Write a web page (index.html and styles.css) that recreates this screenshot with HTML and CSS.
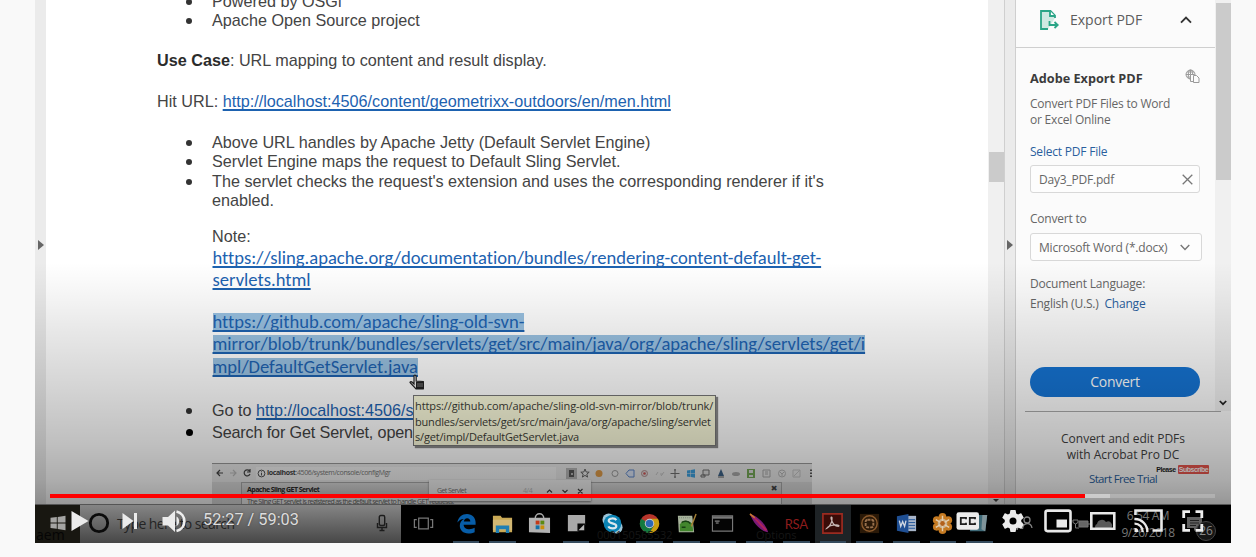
FILE: index.html
```html
<!DOCTYPE html>
<html lang="en">
<head>
<meta charset="utf-8">
<title>Video player</title>
<link rel="stylesheet" href="styles.css">
</head>
<body>
<main class="player">
  <div class="screen">
    <div class="rail"><i class="tri"></i></div>
    <article class="doc">
      <p class="li l1"><span>Powered by OSGi</span></p>
      <p class="li"><span>Apache Open Source project</span></p>
      <p class="use"><b>Use Case</b>: URL mapping to content and result display.</p>
      <p class="hit">Hit URL: <a>http://localhost:4506/content/geometrixx-outdoors/en/men.html</a></p>
      <p class="li above"><span>Above URL handles by Apache Jetty (Default Servlet Engine)</span></p>
      <p class="li t2"><span>Servlet Engine maps the request to Default Sling Servlet.</span></p>
      <p class="li t3"><span>The servlet checks the request's extension and uses the corresponding renderer if it's</span></p>
      <p class="in">enabled.</p>
      <p class="in note">Note:</p>
      <p class="cal c1"><a>https://sling.apache.org/documentation/bundles/rendering-content-default-get-</a></p>
      <p class="cal c2"><a>servlets.html</a></p>
      <p class="cal c3"><a class="sel">https://github.com/apache/sling-old-svn-</a></p>
      <p class="cal c4"><a class="sel">mirror/blob/trunk/bundles/servlets/get/src/main/java/org/apache/sling/servlets/get/i</a></p>
      <p class="cal c5"><a class="sel">mpl/DefaultGetServlet.java</a></p>
      <p class="li go"><span>Go to <a>http://localhost:4506/s</a></span></p>
      <p class="li search"><span>Search for Get Servlet, open</span></p>
      <section class="shot">
        <div class="shot-bar">
          <svg width="44" height="18" viewBox="0 0 44 18" fill="none" stroke="#444" stroke-width="1.2"><path d="M11 9H5m3-3-3 3 3 3"/><path d="M18 9h6m-3-3 3 3-3 3" stroke="#bbb"/><path d="M37.500 7a3 3 0 1 0 .5 3M38 5v3h-3"/></svg>
          <div class="url"><svg width="9" height="9" viewBox="0 0 9 9" fill="none" stroke="#555"><circle cx="4.500" cy="4.500" r="3.400"/><path d="M4.500 4v2.500M4.500 2.300v1"/></svg><span><b>localhost</b>:4506/system/console/configMgr</span></div>
          <svg class="ext" width="256" height="18" viewBox="0 0 256 18">
            <path fill="#aaa" d="M10 4h11v11H10z"/><path fill="#333" d="M13 6h5v7h-5z"/><path d="M15 9h2v2h-2z" fill="#aaa"/>
            <path d="m29 5 1.200 3 3 .2-2.400 1.900.8 3-2.600-1.700-2.600 1.700.8-3-2.400-1.900 3-.2z" fill="none" stroke="#444"/>
            <circle cx="43" cy="9.500" r="3.500" fill="#dd8a22"/><circle cx="59" cy="9.500" r="3" fill="#eee" stroke="#888"/>
            <path d="M70 9.500 73 6h5v7h-5z" fill="#d8e4f8" stroke="#3b6fc4"/><circle cx="88.500" cy="9.500" r="3" fill="#ddd" stroke="#a77"/><circle cx="88.500" cy="9.500" r="1.300" fill="#c33"/>
            <path d="m100 11 2-3m3 4 3-4m-4 2h3" stroke="#bbb"/><path d="M119 5v9m-4.500-4.500h9M118 6h2m-2 7h2" stroke="#555"/>
            <path d="M131 6.500 134.500 6v3.200H131zm4-.5 4-.7v4h-4zM131 9.800h3.500V13l-3.500-.5zm4 0h4v4l-4-.7z" fill="#1590dd"/>
            <path d="M147 6h6v5h-6zm-2 5h4v2h-4z" fill="#ddd" stroke="#555"/><path d="m165 5 3 7h-6z" fill="#13416f"/><path d="M162 13h6" stroke="#444"/>
            <ellipse cx="180" cy="10" rx="4" ry="2" fill="#999"/><path d="M191 5h8v9h-8z" fill="#5a9a35"/><path d="M193 6h4v3h-4zm0 5h4v2h-4z" fill="#ddd"/>
            <path d="M207 6h7v7h-7zm2 2h3m-3 2h3" fill="none" stroke="#999"/><circle cx="226" cy="9.500" r="3.500" fill="none" stroke="#aaa"/><path d="m224 8 2 2 2-2m-2 2v2" fill="none" stroke="#aaa"/>
            <path d="M237 6h7v7h-7zm1 6 6-6" fill="none" stroke="#bbb"/><path d="M255 5.500v1.500m0 1.500V10m0 1.500V13" stroke="#333" stroke-width="2"/>
          </svg>
        </div>
        <div class="shot-body">
          <div class="card">
            <div class="card-h"><b>Apache Sling GET Servlet</b><i>✖</i></div>
            <div class="card-b">The Sling GET servlet is registered as the default servlet to handle GET requests.</div>
          </div>
        </div>
        <div class="find"><span>Get Servlet</span><em>4/4</em><svg width="46" height="10" viewBox="0 0 46 10" fill="none" stroke="#444" stroke-width="1.200"><path d="M3 6.500 5.500 4 8 6.500M18.500 4 21 6.500 23.500 4M34 3l4.500 4.500m0-4.500L34 7.500"/></svg></div>
      </section>
    </article>
    <div class="doc-scroll"><i></i><svg width="8" height="6" viewBox="0 0 8 6"><path d="M1 1h6L4 4z" fill="#444"/></svg></div>
    <div class="rail right"><i class="tri"></i></div>
    <div class="side">
      <div class="side-top">
        <aside class="panel">
          <header>
            <svg width="22" height="22" viewBox="0 0 22 22" fill="none" stroke="#2ba587" stroke-width="1.800"><path d="M16 9V6.500L11.500 2H2v18h7" fill="#cfe9e2"/><path d="M11 2v5h5" fill="#fff"/><path d="M10.500 12v4h8m-3-3 3.200 3-3.200 3" /></svg>
            <span>Export PDF</span>
            <svg width="12" height="8" viewBox="0 0 12 8" fill="none" stroke="#333" stroke-width="1.900"><path d="m1 6.700 5-5 5 5"/></svg>
          </header>
          <div class="title"><b>Adobe Export PDF</b>
            <svg width="15" height="14" viewBox="0 0 15 14" fill="none" stroke="#9a9a9a"><circle cx="5.500" cy="5.500" r="4.500"/><path d="M1 5.500h8M5.500 1v9M2 3h7M2 8h5"/><ellipse cx="5.500" cy="5.500" rx="2.200" ry="4.500"/><path d="M5.500 5.500h4v7h-4z" fill="#fbfbfb"/><path d="M8.500 6.500h3l2.500 2.500v4.500H8.500z" fill="#fbfbfb"/></svg></div>
          <p class="d1">Convert PDF Files to Word<br>or Excel Online</p>
          <p class="d2"><a>Select PDF File</a></p>
          <div class="field"><span>Day3_PDF.pdf</span><svg width="11" height="11" viewBox="0 0 11 11" stroke="#777" stroke-width="1.300"><path d="m.7.700 9.600 9.600m0-9.600L.7 10.300"/></svg></div>
          <p class="d3">Convert to</p>
          <div class="field wide"><span>Microsoft Word (*.docx)</span><svg width="10" height="7" viewBox="0 0 10 7" fill="none" stroke="#777" stroke-width="1.400"><path d="m.7 1 4.300 4.500L9.300 1"/></svg></div>
          <p class="d4">Document Language:</p>
          <p class="d5">English (U.S.) <a>Change</a></p>
          <button class="convert">Convert</button>
        </aside>
        <div class="side-scroll"><i></i><svg width="8" height="6" viewBox="0 0 8 6" fill="none" stroke="#222" stroke-width="1.700"><path d="m.8 1 3.200 3.200L7.200 1"/></svg></div>
      </div>
      <div class="promo">
        <p>Convert and edit PDFs<br>with Acrobat Pro DC</p>
        <p class="pls">Please <mark>Subscribe</mark></p>
        <p class="trial"><a>Start Free Trial</a></p>
      </div>
    </div>
    <div class="tooltip">https://github.com/apache/sling-old-svn-mirror/blob/trunk/<br><span>bundles/servlets/get/src/main/java/org/apache/sling/servlet</span><br><span>s/get/impl/DefaultGetServlet.java</span></div>
    <svg class="hand" width="18" height="18" viewBox="0 0 18 18"><path d="M5 1.500c1.500-.8 2.200.2 2.200 1.500v4l7 .5v7.500H7L1 8.500c0-1.200 1.500-1.200 2.500 0L5 10z" fill="#f4f4f4" stroke="#222" stroke-width="1.200"/><path d="M7 7.500h8V15H7z" fill="#222"/><path d="M8.500 10h5m-5 2h5" stroke="#ddd" stroke-dasharray="1 1"/></svg>
    <div class="shade"></div>
  </div>

  <div class="taskbar">
    <div class="start"><svg width="18" height="16" viewBox="0 0 18 16" fill="#a5a5a3"><path d="M1.500 2.800 7.800 2v5.500H1.500zM8.700 1.900 16.500.8v6.700H8.700zM1.500 8.400h6.300v5.400l-6.300-.9zM8.700 8.400h7.800v6.800l-7.800-1.200z"/></svg></div>
    <div class="search-box"><svg width="22" height="22" viewBox="0 0 22 22"><circle cx="11" cy="11" r="8.700" fill="none" stroke="#0b0b0b" stroke-width="2.800"/></svg><span>Type here to search</span>
      <svg width="12" height="18" viewBox="0 0 12 18" fill="none" stroke="#1c1c1c" stroke-width="1.400"><rect x="3.300" y="1.500" width="5.400" height="10" rx="1.500"/><path d="M1.500 9v4.500h9V9M6 13.500v3M3.500 16.500h5"/></svg></div>
    <div class="apps">
      <span class="app none"><svg viewBox="0 0 24 24" fill="none" stroke="#777" stroke-width="1.300"><path d="M7 6.500h10v11H7zM5 8H2.500v8H5M19 8h2.500v8H19"/></svg></span>
      <span class="app"><svg viewBox="0 0 24 24"><path d="M2.500 11C3.200 5.500 7.500 2 12.500 2c5.500 0 9 4 9 8.800v2.500H9c.3 3.500 3 4.700 6 4.700 2 0 4-.6 5.500-1.500V21c-1.800.9-4 1.400-6.500 1.400-5.500 0-9-3.500-9-8 0-3 1.600-5.500 4.200-7-3.200.2-5.200 1.600-6.700 3.600zM9.200 10H16c0-2-1.300-3.400-3.300-3.400-2 0-3.200 1.400-3.500 3.400z" fill="#075da8"/></svg></span>
      <span class="app"><svg viewBox="0 0 24 24"><path d="M2 4h8l1.500 2H22v15H2z" fill="#c9a955"/><path d="M2 8h20v11H2z" fill="#d3b874"/><path d="M5 22v-8h14v8h-3.500v-4h-7v4z" fill="#1f7fb4"/></svg></span>
      <span class="app none"><svg viewBox="0 0 24 24"><path d="M7.500 7c0-7 9-7 9 0" fill="none" stroke="#aaa" stroke-width="1.500"/><path d="M1 6h22v16l-22-1z" fill="#b2b2b2"/><path d="M8 9h4v4H8z" fill="#c43a18"/><path d="M13 9h4v4h-4z" fill="#5c8a10"/><path d="M8 14h4v4H8z" fill="#1471a8"/><path d="M13 14h4v4h-4z" fill="#c98f08"/></svg></span>
      <span class="app"><svg viewBox="0 0 24 24"><path d="M3 3h18v10l-7 7H3z" fill="#a9a9a9"/><path d="M13 12h8v8h-8z" fill="#0a0a0a"/><path d="M20 13v6h-6z" fill="#b9b9b9"/></svg></span>
      <span class="app"><svg viewBox="0 0 24 24"><circle cx="8" cy="8" r="6.500" fill="#9cc4d8"/><circle cx="16" cy="16" r="6.500" fill="#9cc4d8"/><circle cx="12" cy="12" r="9.200" fill="#0a83b4"/><path d="M16 8.500c-1.500-2.500-8-2.500-8 .7 0 3.300 8 2 8 5.400 0 3.300-7 3.200-8.300.4" fill="none" stroke="#dce8ee" stroke-width="2.200"/></svg></span>
      <span class="app"><svg viewBox="0 0 24 24"><circle cx="12" cy="12" r="10" fill="#b8352b"/><path d="M3.300 7A10 10 0 0 0 12 22l4.500-7.500L12 12z" fill="#147a3f"/><path d="M12 22a10 10 0 0 0 8.700-15H12l4.500 7.500z" fill="#c9a010"/><circle cx="12" cy="12" r="4.900" fill="#ccc"/><circle cx="12" cy="12" r="3.900" fill="#2b68b5"/></svg></span>
      <span class="app"><svg viewBox="0 0 24 24"><path d="M3 4h15l2 17H4z" fill="#a8b49c"/><path d="M5 13c4-6 8-4 13-1l1 8H5z" fill="#42862d"/><path d="M7 11c2-2 7-2 9 1M7 16h4" stroke="#173f13" stroke-width="1.500" fill="none"/><path d="M4 6h13" stroke="#717b70" stroke-dasharray="1 1.200"/><path d="m22 2-5 13" stroke="#a58035" stroke-width="1.500"/></svg></span>
      <span class="app"><svg viewBox="0 0 24 24"><path d="M1.500 4h21v16h-21z" fill="#050505" stroke="#777" stroke-width="1.200"/><path d="M2 4.500h20v2.500H2z" fill="#777"/><path d="M4 9.500h5m-4 2h3" stroke="#aaa"/></svg></span>
      <span class="app"><svg viewBox="0 0 24 24"><path d="M2 2c7 1 17 11 19 19-6 0-15-8-19-19z" fill="#7b1a78"/><path d="M3 3c5 4 10 10 16 16" stroke="#b02458" stroke-width="2" fill="none"/><path d="M2 2l5 4" stroke="#c28128" stroke-width="1.500"/></svg></span>
      <span class="app rsa">RSA</span>
      <span class="app on"><svg viewBox="0 0 24 24"><path d="M2 2h20v20H2z" fill="#3a0c08" stroke="#9b2b20" stroke-width="1.800"/><path d="M6 17c3-1 6-7 5.500-11-.5-1.500-1.500-.5-.8 1.500C12 12 15 15 18 15c1.500-.3.500-1.500-2-1.500-4 0-8 1-10 3.500z" fill="none" stroke="#c6b5b2" stroke-width="1.300"/></svg></span>
      <span class="app"><svg viewBox="0 0 24 24"><path d="M2 2h20v20H2z" fill="#2a1908"/><circle cx="12" cy="12" r="8" fill="none" stroke="#8b5a2d" stroke-width="1.500"/><rect x="8" y="8" width="8" height="8" rx="2" fill="none" stroke="#98704c" stroke-width="2" stroke-dasharray="3 1"/></svg></span>
      <span class="app"><svg viewBox="0 0 24 24"><path d="M12 4h10v16H12z" fill="#a8b5c9"/><path d="M14 8h7m-7 3h7m-7 3h7m-7 3h7" stroke="#24579a"/><path d="M2 4.500 14 2v20L2 19.500z" fill="#1f4f93"/><path d="m4.500 9 1.500 6 2-5 2 5 1.500-6" fill="none" stroke="#d1d8e2" stroke-width="1.400"/></svg></span>
      <span class="app"><svg viewBox="0 0 24 24"><g fill="#c57a22"><circle cx="12" cy="5" r="4"/><circle cx="12" cy="19" r="4"/><circle cx="6" cy="8.500" r="4"/><circle cx="18" cy="8.500" r="4"/><circle cx="6" cy="15.500" r="4"/><circle cx="18" cy="15.500" r="4"/></g><circle cx="12" cy="12" r="5" fill="#c9b18f"/><path d="M12 4v16M5 8l14 8M5 16l14-8" stroke="#e3ceb0" stroke-width="1.500"/><circle cx="12" cy="12" r="2.500" fill="#b3611c"/></svg></span>
      <span class="app"><svg viewBox="0 0 24 24"><path d="M5 3h15l-2 17H2z" fill="#3e6a78"/><path d="m15 3 5 0-2 17-4-2z" fill="#80949a"/></svg></span>
    </div>
    <div class="tray">
      <svg width="18" height="18" viewBox="0 0 18 18" fill="none" stroke="#858585" stroke-width="1.300"><circle cx="11" cy="5" r="3"/><path d="M6.500 14c.5-7 8.500-7 9.500-1"/><circle cx="4" cy="9" r="2"/><path d="M1 15c.5-4 4-4 5.500-1"/></svg>
      <svg class="bat" width="18" height="12" viewBox="0 0 18 12" fill="none" stroke="#777"><path d="M1 2h5v2.500L3.500 6 1 4.500zM3.500 6v4H7"/><path d="M7 3h9v6H7z" fill="#666"/><path d="M17 5v2"/></svg>
      <svg class="cloud" width="20" height="12" viewBox="0 0 20 12" fill="#595959"><path d="M3 11a3 3 0 0 1 1-5 5 5 0 0 1 9-2 4 4 0 0 1 4 7z"/></svg>
      <div class="clock">6:54 AM<br>9/26/2018</div>
      <div class="action"><svg width="18" height="16" viewBox="0 0 18 16"><path d="M1 1h15v11h-5l-3 3v-3H1z" fill="#606060"/><path d="M4 4.500h9m-9 2.500h9m-9 2.500h6" stroke="#222"/></svg><b>26</b></div>
    </div>
    <span class="ghost g1">aem</span><span class="ghost g2">000150565532</span><span class="ghost g3">Options</span>
  </div>

  <div class="chrome">
    <div class="progress"><i class="played"></i><i class="buffered"></i></div>
    <div class="controls">
      <svg class="play" width="18" height="22" viewBox="0 0 18 22"><path d="M.5 1v20L17.500 11z"/></svg>
      <svg class="next" width="16" height="18" viewBox="0 0 16 18"><path d="M.5 1v16L11.500 9zM12 1h3v16h-3z"/></svg>
      <svg class="vol" width="24" height="24" viewBox="0 0 24 24"><path d="M.5 8v8.500H6l7 6.500V1.500L6 8z"/><path d="M14.500 7.500c3.500 1.500 3.500 8 0 9.500z"/><path d="M14.500 2.500c10.500 2.500 10.500 17 0 19.500" fill="none" stroke="#eee" stroke-width="2.600"/></svg>
      <span class="time">52:27 / 59:03</span>
      <svg class="cc" width="24" height="18" viewBox="0 0 24 18"><rect x=".5" y=".3" width="22.500" height="17.400" rx="2.300"/><path d="M10 7.200V5.800H4.800v6.400H10v-1.400M19 7.200V5.800h-5.200v6.400H19v-1.400" fill="none" stroke="#1c1c1c" stroke-width="1.800"/></svg>
      <svg class="gear" width="22" height="22" viewBox="2 2 20 20"><path d="M19.430 12.980c.04-.32.070-.64.070-.98s-.03-.66-.07-.98l2.110-1.650a.5.500 0 0 0 .12-.64l-2-3.460a.5.500 0 0 0-.61-.22l-2.490 1a7.300 7.300 0 0 0-1.690-.98l-.38-2.650A.49.490 0 0 0 14 2h-4a.49.490 0 0 0-.49.420l-.38 2.650c-.61.250-1.170.59-1.690.98l-2.490-1a.49.490 0 0 0-.61.220l-2 3.460a.49.490 0 0 0 .12.640l2.110 1.650c-.04.320-.07.650-.07.980s.03.660.070.980l-2.110 1.650a.5.500 0 0 0-.12.640l2 3.460c.12.220.39.300.61.220l2.490-1c.52.400 1.080.73 1.690.98l.38 2.650c.03.240.24.420.49.420h4c.25 0 .46-.18.490-.42l.38-2.650a7.300 7.300 0 0 0 1.690-.98l2.490 1c.23.090.49 0 .61-.22l2-3.460a.5.500 0 0 0-.12-.64zM12 15.200a3.200 3.200 0 1 1 0-6.400 3.200 3.200 0 0 1 0 6.400z"/></svg>
      <svg class="mini" width="28" height="24" viewBox="0 0 28 24"><rect x="1.500" y="1.600" width="25" height="20.500" rx="2" fill="none" stroke="#e8e8e8" stroke-width="2.600"/><path d="M12.500 10.500h10.500v8H12.500z"/></svg>
      <svg class="theatre" width="26" height="18" viewBox="0 0 26 18"><path d="M1.300 1.300h23v15.400h-23z" fill="none" stroke="#e8e8e8" stroke-width="2.600"/></svg>
      <svg class="cast" width="29" height="24" viewBox="0 0 29 24"><path d="M1.500 6V1.500h26v20H18.500" fill="none" stroke="#e8e8e8" stroke-width="2.600"/><path d="M.5 19v4h4a4 4 0 0 0-4-4z"/><path d="M.5 14.600a8 8 0 0 1 8.200 8.400M.5 10a12.500 12.500 0 0 1 12.800 13" fill="none" stroke="#e8e8e8" stroke-width="2.400"/></svg>
      <svg class="full" width="22" height="22" viewBox="0 0 22 22"><path d="M1.700 8V1.700H8M13.500 1.700h6.300V8M19.800 14v6.300h-6.300M8 20.300H1.700V14" fill="none" stroke="#eee" stroke-width="2.800"/></svg>
    </div>
  </div>
</main>
</body>
</html>
```
FILE: styles.css
```css
* { box-sizing: border-box; }
body { margin: 0; background: #f9f9f9; overflow: hidden; }
p { margin: 0; white-space: pre; }
svg { display: block; flex: none; }

.player {
  position: relative;
  display: grid;
  grid-template-rows: 504px 39px;
  width: 1196px;
  height: 543px;
  margin-left: 35px;
  overflow: hidden;
  background: #000;
}
.screen { position: relative; display: flex; background: #fff; overflow: hidden; }
.shade {
  position: absolute;
  inset: 262px 0 0 0;
  background: linear-gradient(rgba(0,0,0,0), rgba(0,0,0,.035) 12%, rgba(0,0,0,.09) 28%, rgba(0,0,0,.17) 52%, rgba(0,0,0,.25) 75%, rgba(0,0,0,.32) 90%, rgba(0,0,0,.4));
}

.rail { display: flex; flex: none; width: 11px; padding: 240px 0 0 3px; background: #ebebeb; }
.rail.right { width: 12px; border: solid #cfcfcf; border-width: 0 1px; padding-left: 2px; }
.tri { width: 0; height: 0; border: solid transparent; border-width: 5px 0 5px 6px; border-left-color: #666; }

/* document page */
.doc {
  flex: none;
  width: 942px;
  height: 504px;
  padding-left: 111px;
  overflow: hidden;
  color: #444;
  font: 16.2px/19px "Liberation Sans", Arial, sans-serif;
}
.doc a { color: #1d62b0; text-decoration: underline; text-decoration-thickness: 1.5px; text-underline-offset: 2px; text-decoration-skip-ink: none; }
.doc b { color: #2b2b2b; }
.li { display: flex; align-items: center; padding-left: 29px; }
.li::before { content: ""; flex: none; width: 6px; height: 6px; margin-right: 20px; border-radius: 50%; background: #333; }
.in { padding-left: 55px; }
.l1 { margin-top: -8px; }
.use { margin-top: 21px; }
.hit { margin-top: 21.5px; }
.above { margin-top: 22.5px; }
.t3 { margin-top: 1px; }
.note { margin-top: 17px; }
.cal { height: 22px; padding-left: 55.5px; font: 18.6px/22px Carlito, Lato, "Open Sans", sans-serif; font-variant-ligatures: none; }
.c1 { margin-top: 1px; }
.c3 { margin-top: 20px; }
.c4 { letter-spacing: -.01px; }
.c5 { margin-top: 1px; }
.sel { display: inline-block; height: 18px; line-height: 18px; background: #99c1e1; }
.go { margin-top: 23px; }
.search { margin-top: 3px; letter-spacing: -.15px; }
.search::before { background: #000; width: 7px; height: 7px; margin-right: 19px; }

/* embedded browser capture */
.shot { position: relative; width: 600px; height: 45px; margin: 21px 0 0 55px; border-top: 1px solid #999; background: #dcdcdc; font: 7px/10px "Open Sans", sans-serif; }
.shot-bar { display: flex; align-items: center; height: 18px; background: #e9e9e9; }
.url { display: flex; align-items: center; gap: 1px; flex: none; width: 300px; height: 13px; padding-left: 1px; background: #f3f3f3; color: #777; letter-spacing: -.38px; }
.url b { color: #444; }
.ext { opacity: .8; }
.shot-body { padding-left: 29px; }
.card { width: 541px; border: 1px solid #aaa; background: #f0f0f0; }
.card-h { display: flex; justify-content: space-between; height: 13px; padding: 0 4px 0 5px; background: linear-gradient(#ddd, #c9c9c9); line-height: 13px; letter-spacing: -.55px; }
.card-h b { font-size: 7px; }
.card-h i { font: 8px/12px "DejaVu Sans", sans-serif; }
.card-b { padding: 0 5px; font: 7px/12px "Open Sans", sans-serif; letter-spacing: -.64px; color: #666; white-space: nowrap; }
.find { position: absolute; left: 217px; top: 16px; display: flex; align-items: center; width: 162px; height: 21px; padding-left: 8px; background: #f3f3f3; box-shadow: 0 1px 2px #777; color: #777; }
.find em { margin: 0 12px 0 57px; font-style: normal; color: #bbb; letter-spacing: -.5px; }
.find span { letter-spacing: -.6px; }

.doc-scroll { display: flex; flex-direction: column; justify-content: space-between; align-items: center; flex: none; width: 16px; padding-top: 152px; background: #f0f0f0; }
.doc-scroll i { width: 15px; height: 30px; background: #cbcbcb; }

/* export panel */
.side { display: flex; flex-direction: column; flex: none; width: 215px; background: #fbfbfb; color: #666; font: 12px/15px "Open Sans", "Noto Sans", sans-serif; letter-spacing: -.21px; }
.side a { color: #2a5f9e; }
.side-top { display: flex; height: 411px; }
.panel { width: 199px; padding: 0; }
.panel header { display: flex; align-items: center; height: 48px; padding: 0 0 8px 23px; border-bottom: 1px solid #cfcfcf; font-size: 14px; letter-spacing: 0; color: #5c5c5c; }
.panel header span { width: 110px; margin-left: 9px; }
.title { display: flex; justify-content: space-between; height: 20px; margin-top: 20px; padding: 0 15px 0 14px; font-size: 12.7px; line-height: 20px; letter-spacing: 0; color: #3b3b3b; }
.title svg { margin-top: 1px; }
.panel p { padding-left: 14px; }
.d1 { margin-top: 8px; line-height: 15.5px; }
.d2 { margin-top: 17px; }
.field { display: flex; align-items: center; justify-content: space-between; width: 170px; height: 28px; margin: 6px 0 0 14px; padding: 0 6px 0 8px; border: 1px solid #d8d8d8; border-radius: 3px; background: #fdfdfd; }
.field.wide { width: 172px; margin-top: 7px; padding-right: 11px; }
.d3 { margin-top: 18px; }
.d4 { margin-top: 15px; }
.d5 { margin-top: 5px; }
.d5 a { margin-left: 3px; }
.convert { width: 170px; height: 30px; margin: 56px 0 0 14px; padding: 0; border: 0; border-radius: 15px; background: #1573d2; color: #fff; font: 14px/28px "Open Sans", sans-serif; letter-spacing: -.3px; }
.side-scroll { display: flex; flex-direction: column; justify-content: space-between; align-items: center; width: 16px; padding: 3px 0 5px; background: #f0f0f0; }
.side-scroll i { width: 15px; height: 177px; background: #cbcbcb; }
.promo { margin: 0 10px 0 9px; height: 93px; padding-top: 19px; border-top: 1px solid #a8a8a8; text-align: center; letter-spacing: 0; color: #404040; }
.promo p { line-height: 15.5px; }
.promo p.pls { display: flex; justify-content: flex-end; align-items: center; gap: 1px; height: 9px; margin-top: 3px; padding-right: 12px; font: bold 7px/9px "Liberation Sans", sans-serif; letter-spacing: -.5px; color: #222; }
.pls mark { width: 31px; background: #e8564e; color: #fff; border-radius: 1px; }
.promo p.trial { margin-top: -3px; font-size: 11.5px; letter-spacing: -.65px; }

.tooltip { position: absolute; left: 378px; top: 395px; width: 303px; height: 51px; padding: 2px 0 0 1px; border: 1px solid #777; background: #fbfbdc; box-shadow: 2px 2px 1px #8a8a8a; color: #3c3c35; font: 11px/15.6px "Open Sans", sans-serif; letter-spacing: -.1px; white-space: nowrap; }
.tooltip span { letter-spacing: -.18px; }
.hand { position: absolute; left: 374px; top: 374px; }

/* desktop taskbar */
.taskbar { position: relative; display: flex; border-top: 1px solid #555; background: #000; }
.start { display: flex; flex: none; width: 45px; padding: 10px 0 0 14px; background: #181711; }
.search-box { display: flex; flex: none; align-items: center; width: 321px; padding: 0 13px 0 8px; background: linear-gradient(#858585, #474747); color: #242424; font: 14px/38px "Open Sans", sans-serif; letter-spacing: -.6px; }
.search-box svg { margin-top: -2px; }
.search-box span { width: 259px; margin-left: 7px; }
.apps { display: flex; flex: none; width: 600px; padding-left: 4px; background: #000; }
.app { display: flex; align-items: center; justify-content: center; flex: none; width: 36.7px; height: 38px; position: relative; }
.app:first-child { margin-right: 6px; }
.app svg { width: 23px; height: 23px; margin-top: -2px; }
.app:not(.none)::after { content: ""; position: absolute; left: 5px; right: 5px; bottom: 0; height: 2px; background: #344a5c; }
.app.on { background: #1e2326; }
.rsa { color: #8d1c1c; font: 13px/38px Lato, sans-serif; letter-spacing: -.3px; }
.tray { display: flex; align-items: center; flex: 1; padding-left: 15px; }
.tray .bat { margin-left: 38px; }
.tray .cloud { margin-left: 3px; }
.clock { width: 70px; text-align: center; color: #777; font: 12px/17px "Open Sans", sans-serif; letter-spacing: -.4px; }
.action { display: flex; align-items: center; width: 50px; height: 38px; padding-left: 3px; border-right: 1px solid #555; }
.action b { width: 20px; height: 20px; margin: 13px 0 0 -8px; border: 1px solid #444; border-radius: 50%; background: #151515; color: #888; font: 12px/18px "Open Sans", sans-serif; text-align: center; }
.ghost { position: absolute; top: 22px; color: #161616; font: 14px/16px "Open Sans", sans-serif; }
.g1 { left: 1px; color: #050505; }
.g2 { left: 562px; font-size: 11px; }
.g3 { left: 721px; font-size: 11px; }

/* player controls */
.chrome { position: absolute; inset: 494px 0 0 0; }
.progress { display: flex; width: 1165px; height: 4px; margin-left: 15px; background: rgba(255,255,255,.2); }
.played { width: 1035px; background: #f00; }
.buffered { width: 25px; background: rgba(255,255,255,.35); }
.controls { display: flex; align-items: center; height: 45px; padding-left: 36px; fill: #ebebeb; }
.play { margin-top: 1px; }
.next { margin-left: 33px; }
.vol { margin: 1px 0 0 24px; }
.time { width: 753px; margin: -2px 0 0 17px; color: #ddd; font: 16.3px/20px Roboto, sans-serif; text-shadow: 0 0 2px #444; }
.gear { margin-left: 22px; }
.mini { margin-left: 20px; }
.theatre { margin-left: 18px; }
.cast { margin: 1px 0 0 18px; }
.full { margin-left: 19px; }
```
